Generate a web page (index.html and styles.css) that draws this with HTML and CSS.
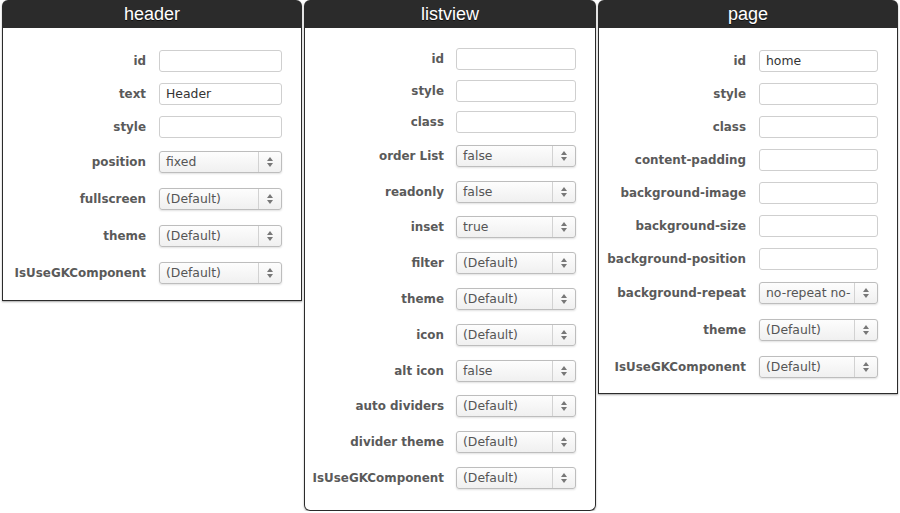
FILE: index.html
```html
<!DOCTYPE html>
<html>
<head>
<meta charset="utf-8">
<link rel="stylesheet" href="styles.css">
</head>
<body>
<div class="panels">
  <section class="panel panel-header">
    <div class="panel-head">header</div>
    <div class="panel-body">
      <div class="row row-in"><label>id</label><div class="input"></div></div>
      <div class="row row-in"><label>text</label><div class="input">Header</div></div>
      <div class="row row-in"><label>style</label><div class="input"></div></div>
      <div class="row row-sel"><label>position</label><div class="select"><span class="val">fixed</span><span class="arrows"><i class="up"></i><i class="down"></i></span></div></div>
      <div class="row row-sel"><label>fullscreen</label><div class="select"><span class="val">(Default)</span><span class="arrows"><i class="up"></i><i class="down"></i></span></div></div>
      <div class="row row-sel"><label>theme</label><div class="select"><span class="val">(Default)</span><span class="arrows"><i class="up"></i><i class="down"></i></span></div></div>
      <div class="row row-sel"><label>IsUseGKComponent</label><div class="select"><span class="val">(Default)</span><span class="arrows"><i class="up"></i><i class="down"></i></span></div></div>
    </div>
  </section>

  <section class="panel panel-listview">
    <div class="panel-head">listview</div>
    <div class="panel-body">
      <div class="row row-in"><label>id</label><div class="input"></div></div>
      <div class="row row-in"><label>style</label><div class="input"></div></div>
      <div class="row row-in"><label>class</label><div class="input"></div></div>
      <div class="row row-sel"><label>order List</label><div class="select"><span class="val">false</span><span class="arrows"><i class="up"></i><i class="down"></i></span></div></div>
      <div class="row row-sel"><label>readonly</label><div class="select"><span class="val">false</span><span class="arrows"><i class="up"></i><i class="down"></i></span></div></div>
      <div class="row row-sel"><label>inset</label><div class="select"><span class="val">true</span><span class="arrows"><i class="up"></i><i class="down"></i></span></div></div>
      <div class="row row-sel"><label>filter</label><div class="select"><span class="val">(Default)</span><span class="arrows"><i class="up"></i><i class="down"></i></span></div></div>
      <div class="row row-sel"><label>theme</label><div class="select"><span class="val">(Default)</span><span class="arrows"><i class="up"></i><i class="down"></i></span></div></div>
      <div class="row row-sel"><label>icon</label><div class="select"><span class="val">(Default)</span><span class="arrows"><i class="up"></i><i class="down"></i></span></div></div>
      <div class="row row-sel"><label>alt icon</label><div class="select"><span class="val">false</span><span class="arrows"><i class="up"></i><i class="down"></i></span></div></div>
      <div class="row row-sel"><label>auto dividers</label><div class="select"><span class="val">(Default)</span><span class="arrows"><i class="up"></i><i class="down"></i></span></div></div>
      <div class="row row-sel"><label>divider theme</label><div class="select"><span class="val">(Default)</span><span class="arrows"><i class="up"></i><i class="down"></i></span></div></div>
      <div class="row row-sel"><label>IsUseGKComponent</label><div class="select"><span class="val">(Default)</span><span class="arrows"><i class="up"></i><i class="down"></i></span></div></div>
    </div>
  </section>

  <section class="panel panel-page">
    <div class="panel-head">page</div>
    <div class="panel-body">
      <div class="row row-in"><label>id</label><div class="input">home</div></div>
      <div class="row row-in"><label>style</label><div class="input"></div></div>
      <div class="row row-in"><label>class</label><div class="input"></div></div>
      <div class="row row-in"><label>content-padding</label><div class="input"></div></div>
      <div class="row row-in"><label>background-image</label><div class="input"></div></div>
      <div class="row row-in"><label>background-size</label><div class="input"></div></div>
      <div class="row row-in"><label>background-position</label><div class="input"></div></div>
      <div class="row row-sel"><label>background-repeat</label><div class="select"><span class="val">no-repeat no-</span><span class="arrows"><i class="up"></i><i class="down"></i></span></div></div>
      <div class="row row-sel"><label>theme</label><div class="select"><span class="val">(Default)</span><span class="arrows"><i class="up"></i><i class="down"></i></span></div></div>
      <div class="row row-sel"><label>IsUseGKComponent</label><div class="select"><span class="val">(Default)</span><span class="arrows"><i class="up"></i><i class="down"></i></span></div></div>
    </div>
  </section>
</div>
</body>
</html>
```

FILE: styles.css
```css
html, body {
  margin: 0;
  padding: 0;
  background: #fff;
}

.panels {
  display: flex;
  align-items: flex-start;
  gap: 2px;
  padding-left: 2px;
}

.panel {
  --in-h: 33px;
  --sel-h: 37px;
  --field-w: 123px;
  --gap: 13px;
  width: 300px;
  box-sizing: border-box;
  border-radius: 6px 6px 0 0;
  box-shadow: 0 1px 2px rgba(0, 0, 0, 0.35);
}

.panel-listview {
  --in-h: 31.5px;
  --sel-h: 35.8px;
  --field-w: 120px;
  --gap: 12px;
  width: 292px;
  border-radius: 6px;
}

.panel-page {
  --in-h: 33px;
  --sel-h: 36.8px;
  --field-w: 119px;
  --gap: 13px;
}

.panel-head {
  height: 28px;
  line-height: 28px;
  background: #2b2b2b;
  border-radius: 6px 6px 0 0;
  color: #fff;
  text-align: center;
  font-family: "Liberation Sans", Arial, sans-serif;
  font-size: 18px;
  text-shadow: 0 1px 0 #111;
}

.panel-body {
  background: #fff;
  border: 1px solid #2b2b2b;
  border-top: none;
  padding: 16px 19px 9px 0;
}

.panel-listview .panel-body {
  padding-top: 15.5px;
  border-radius: 0 0 6px 6px;
  padding-bottom: 14.5px;
}

.panel-page .panel-body {
  padding-bottom: 8px;
}

.row {
  display: grid;
  grid-template-columns: 1fr var(--field-w);
  column-gap: var(--gap);
  align-items: center;
}

.row-in { height: var(--in-h); }
.row-sel { height: var(--sel-h); }

.row label {
  text-align: right;
  font-family: "DejaVu Sans", Verdana, sans-serif;
  font-weight: bold;
  font-size: 11.9px;
  color: #5a5a5a;
  white-space: nowrap;
}

.input {
  height: 22px;
  box-sizing: border-box;
  border: 1px solid #cfcfcf;
  border-radius: 3px;
  background: #fff;
  padding: 0 6px;
  line-height: 20px;
  font-family: "DejaVu Sans", Verdana, sans-serif;
  font-size: 12.4px;
  color: #333;
  white-space: nowrap;
  overflow: hidden;
}

.select {
  display: flex;
  height: 22px;
  box-sizing: border-box;
  border: 1px solid #bdbdbd;
  border-radius: 3px;
  background: linear-gradient(#fdfdfd, #f0f0f0);
  box-shadow: 0 1px 2px rgba(0, 0, 0, 0.12);
  overflow: hidden;
}

.select .val {
  flex: 1;
  min-width: 0;
  padding: 0 0 0 6px;
  line-height: 20px;
  font-family: "DejaVu Sans", Verdana, sans-serif;
  font-size: 12.4px;
  color: #555;
  white-space: nowrap;
  overflow: hidden;
}

.select .arrows {
  flex: none;
  width: 22px;
  border-left: 1px solid #d2d2d2;
  display: flex;
  flex-direction: column;
  align-items: center;
  justify-content: center;
  gap: 2px;
}

.arrows i {
  display: block;
  width: 0;
  height: 0;
  border-left: 3px solid transparent;
  border-right: 3px solid transparent;
}

.arrows .up { border-bottom: 4px solid #777; }
.arrows .down { border-top: 4px solid #777; }
```
